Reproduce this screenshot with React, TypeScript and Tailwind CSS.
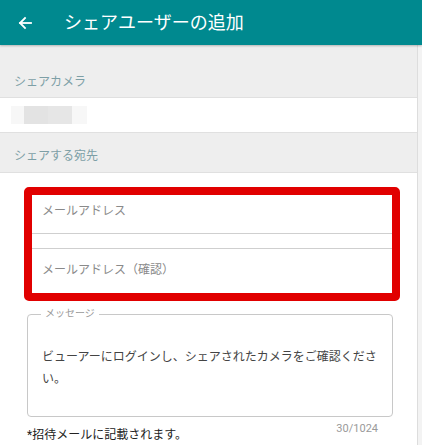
import React from "react";

const font = { fontFamily: '"Roboto", "Noto Sans CJK JP", sans-serif' };

function BackArrow() {
  return (
    <svg width="16" height="16" viewBox="0 0 16 16" fill="none" stroke="#ffffff" strokeWidth="1.8" strokeLinecap="square">
      <path d="M14 8H3" />
      <path d="M8 3L3 8l5 5" />
    </svg>
  );
}

function SectionLabel({ children, className }: { children: React.ReactNode; className: string }) {
  return (
    <div className={`bg-[#eeeeee] px-[14px] text-[12px] leading-[16px] text-[#7d9fa6] ${className}`}>
      {children}
    </div>
  );
}

export default function App() {
  return (
    <div className="w-[422px] h-[445px] overflow-hidden bg-white" style={font}>
      <header className="relative z-10 flex h-[45px] items-center bg-[#00898f] shadow-[0_1px_2px_rgba(0,0,0,0.25)]">
        <div className="ml-[17px] flex w-[16px] items-center">
          <BackArrow />
        </div>
        <h1 className="ml-[31px] text-[18px] leading-[24px] text-white">シェアユーザーの追加</h1>
      </header>

      <div className="flex h-[400px]">
        <main className="w-[418px] border-r border-[#dddddd]">
          <SectionLabel className="h-[52px] pt-[29px]">シェアカメラ</SectionLabel>

          <div className="flex h-[36px] items-center border-y border-[#e0e0e0] bg-white pl-[11px]">
            <div className="flex h-[18px] w-[76px] bg-[#f7f7f7]">
              <div className="ml-[13px] h-full w-[24px] bg-[#e3e3e3]" />
              <div className="h-full w-[24px] bg-[#e6e6e6]" />
            </div>
          </div>

          <SectionLabel className="h-[39px] pt-[15px]">シェアする宛先</SectionLabel>

          <div className="border-t border-[#e0e0e0] bg-white pt-[14px]">
            <div className="ml-[24px] w-[376px] rounded-[5px] border-[8px] border-[#e10000] bg-white">
              <div className="h-[39px] border-b border-[#cfcfcf] pl-[10px] pt-[8px] text-[12px] leading-[16px] text-[#8a8a8a]">
                メールアドレス
              </div>
              <div className="mt-[14px] h-[45px] border-t border-[#cfcfcf] pl-[10px] pt-[13px] text-[12px] leading-[16px] text-[#8a8a8a]">
                メールアドレス（確認）
              </div>
            </div>

            <fieldset className="ml-[27px] mt-[7px] h-[109px] w-[366px] rounded-[4px] border border-[#c8c8c8] px-[14px]">
              <legend className="ml-[-1px] px-[4px] text-[10px] leading-[12px] text-[#9a9a9a]">メッセージ</legend>
              <p className="mt-[26px] text-[12px] leading-[22px] text-[#444444]">
                ビューアーにログインし、シェアされたカメラをご確認ください。
              </p>
            </fieldset>

            <div className="mt-[5px] flex items-start justify-between pl-[27px] pr-[39px]">
              <span className="mt-[5px] text-[12px] leading-[16px] text-[#222222]">*招待メールに記載されます。</span>
              <span className="text-[11px] leading-[14px] text-[#9a9a9a]">30/1024</span>
            </div>
          </div>
        </main>
        <div className="flex-1 bg-[#f3f3f3]" />
      </div>
    </div>
  );
}
